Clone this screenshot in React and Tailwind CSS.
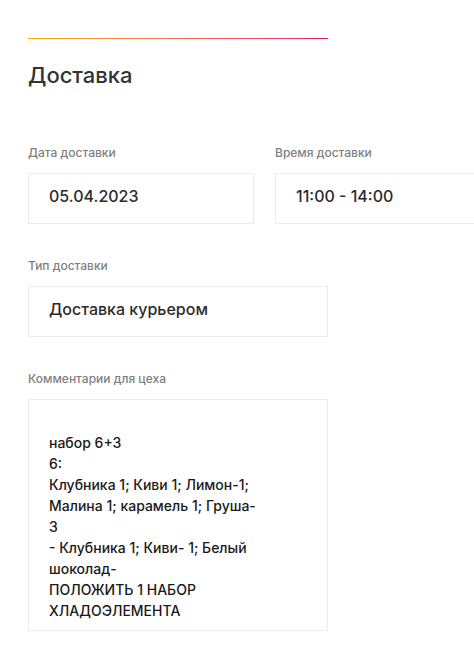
export default function App() {
  const comment = [
    'набор 6+3',
    '6:',
    'Клубника 1; Киви 1; Лимон-1;',
    'Малина 1; карамель 1; Груша-',
    '3',
    '- Клубника 1; Киви- 1; Белый',
    'шоколад-',
    'ПОЛОЖИТЬ 1 НАБОР',
    'ХЛАДОЭЛЕМЕНТА',
  ];

  return (
    <div className="w-[474px] h-[660px] overflow-hidden bg-white pl-[28px] pt-[38px] font-['Inter',sans-serif] text-[#2b2b2b]">
      <div className="w-[300px] h-px bg-gradient-to-r from-[#f7a800] to-[#ea0a6a]" />
      <h2 className="mt-[22px] text-[22px] leading-[28px] font-medium text-[#333]">Доставка</h2>

      <div className="mt-[56px] flex gap-[21px]">
        <div className="w-[226px] shrink-0">
          <div className="text-[12px] leading-[16px] font-medium text-[#808080]">Дата доставки</div>
          <div className="mt-[12px] h-[51px] border border-[#ececec] flex items-center px-[20px] pb-[6px] text-[16px] font-medium">05.04.2023</div>
        </div>
        <div className="w-[226px] shrink-0">
          <div className="text-[12px] leading-[16px] font-medium text-[#808080]">Время доставки</div>
          <div className="mt-[12px] h-[51px] border border-[#ececec] flex items-center px-[20px] pb-[6px] text-[16px] font-medium">11:00 - 14:00</div>
        </div>
      </div>

      <div className="mt-[34px] w-[300px]">
        <div className="text-[12px] leading-[16px] font-medium text-[#808080]">Тип доставки</div>
        <div className="mt-[12px] h-[51px] border border-[#ececec] flex items-center px-[20px] pb-[6px] text-[16px] font-medium">Доставка курьером</div>
      </div>

      <div className="mt-[34px] w-[300px]">
        <div className="text-[12px] leading-[16px] font-medium text-[#808080]">Комментарии для цеха</div>
        <div className="mt-[12px] border border-[#ececec] px-[20px] pt-[32px] pb-[9px] text-[14px] leading-[21px] font-medium text-[#1a1a1a]">
          {comment.map((line, i) => (
            <div key={i}>{line}</div>
          ))}
        </div>
      </div>
    </div>
  );
}
